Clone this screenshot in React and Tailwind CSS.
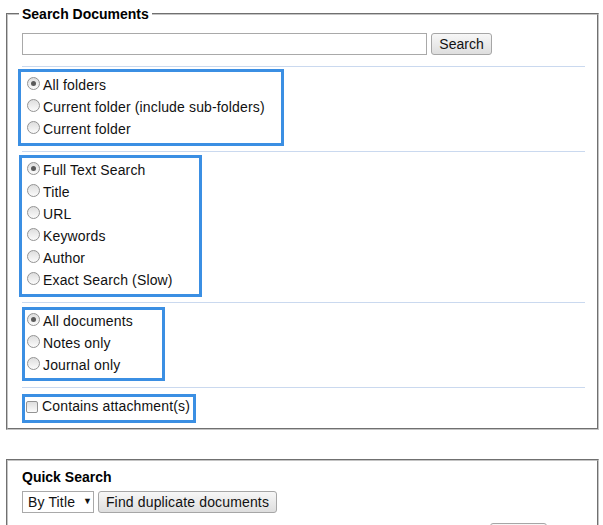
import React from "react";

const font = { fontFamily: '"Liberation Sans", Arial, sans-serif' };

function Radio({ checked, label }) {
  return (
    <label className="flex items-center h-[22px] text-[14px] tracking-[0.15px] text-[#111]">
      <span className="relative mb-[3px] w-[13px] h-[13px] rounded-full border border-[#939393] bg-linear-to-b from-[#dedede] to-[#fbfbfb] flex items-center justify-center shrink-0">
        {checked && <span className="w-[5px] h-[5px] rounded-full bg-[#5a5a5a]" />}
      </span>
      <span className="ml-[3px]">{label}</span>
    </label>
  );
}

function Group({ className, children }) {
  return <div className={"border-[3px] border-[#3b8fe3] " + className}>{children}</div>;
}

const Rule = ({ className }) => <div className={"h-px bg-[#cad9ef] " + className} />;

const btn =
  "h-[22px] border border-[#a6a6a6] rounded-[3px] bg-linear-to-b from-[#f7f7f7] to-[#dedede] text-[14px] text-[#111] leading-none";

export default function App() {
  return (
    <div className="bg-white w-[603px] h-[525px] overflow-hidden pt-[6px]" style={font}>
      {/* Search Documents */}
      <fieldset className="ml-[6px] mr-[4px] border-2 [border-style:groove] border-[#c4c4c4]">
        <legend className="ml-[11px] px-[3px] text-[14px] leading-[16px] font-bold text-black">Search Documents</legend>
        <div className="pl-[14px] pr-[12px] pb-[5px]">
          <div className="flex mt-[11px]">
            <input className="w-[405px] h-[22px] border border-[#a9a9a9] bg-white outline-none px-1 text-[14px]" />
            <button className={btn + " ml-[4px] w-[61px]"}>Search</button>
          </div>
          <Rule className="mt-[11px]" />

          <Group className="mt-[2px] -ml-[4px] w-[266px] h-[77px] pl-[6px] pt-[2px]">
            <Radio checked label="All folders" />
            <Radio label="Current folder (include sub-folders)" />
            <Radio label="Current folder" />
          </Group>
          <Rule className="mt-[5px]" />

          <Group className="mt-[3px] -ml-[3px] w-[183px] h-[142px] pl-[5px] pt-[1px]">
            <Radio checked label="Full Text Search" />
            <Radio label="Title" />
            <Radio label="URL" />
            <Radio label="Keywords" />
            <Radio label="Author" />
            <Radio label="Exact Search (Slow)" />
          </Group>
          <Rule className="mt-[5px]" />

          <Group className="mt-[4px] w-[143px] h-[74px] pl-[2px]">
            <Radio checked label="All documents" />
            <Radio label="Notes only" />
            <Radio label="Journal only" />
          </Group>
          <Rule className="mt-[6px]" />

          <Group className="mt-[6px] w-[174px] h-[29px] pl-px">
            <label className="-mt-[2px] flex items-center h-[22px] text-[14px] tracking-[0.15px] text-[#111]">
              <span className="mt-[1px] w-[12px] h-[12px] rounded-[2px] border border-[#939393] bg-linear-to-b from-[#dedede] to-[#fbfbfb] shrink-0" />
              <span className="ml-[4px]">Contains attachment(s)</span>
            </label>
          </Group>
        </div>
      </fieldset>

      {/* Quick Search */}
      <div className="ml-[6px] mr-[4px] mt-[29px] border-2 [border-style:groove] border-[#c4c4c4] px-[14px] pt-[8px] pb-[8px]">
        <div className="text-[14px] leading-[16px] font-bold text-black">Quick Search</div>
        <div className="flex mt-[6px]">
          <div className="h-[22px] w-[72px] border border-[#a9a9a9] bg-white flex items-center pl-[5px] text-[14px] tracking-[0.15px] text-[#111]">
            By Title
            <span className="ml-[8px] text-[9px]">▼</span>
          </div>
          <button className={btn + " ml-[4px] w-[179px] tracking-[0.15px]"}>Find duplicate documents</button>
        </div>
        <div className="flex mt-[10px]">
          <button aria-label="More" className={btn + " ml-[468px] w-[57px]"} />
        </div>
      </div>
    </div>
  );
}
